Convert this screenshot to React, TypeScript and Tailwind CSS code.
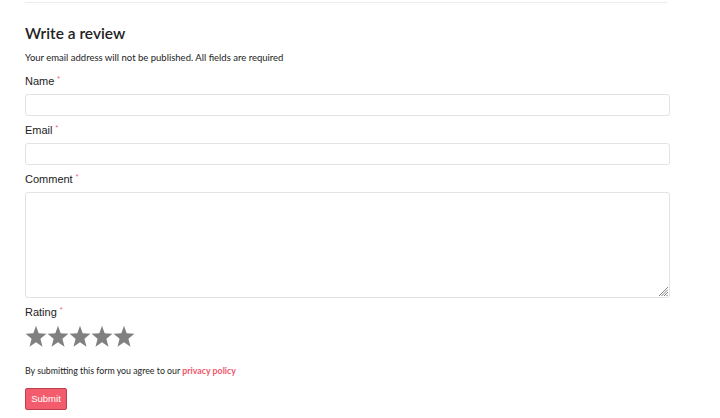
import React from "react";

function Star() {
  return (
    <svg width="22" height="23" viewBox="0 0 24 24" className="block" preserveAspectRatio="none">
      <polygon
        points="12,0.8 14.9,8.7 23.4,9.1 16.8,14.4 19.1,22.8 12,18 4.9,22.8 7.2,14.4 0.6,9.1 9.1,8.7"
        fill="#808080"
      />
    </svg>
  );
}

function Label({ text }: { text: string }) {
  return (
    <div
      className="h-[14px] leading-[14px] text-[11px] text-[#222]"
      style={{ fontFamily: '"Liberation Sans", Arial, sans-serif' }}
    >
      {text}
      <span className="relative -top-[4px] ml-[3px] text-[7px] text-[#f0566a]">*</span>
    </div>
  );
}

export default function App() {
  const raleway = { fontFamily: 'Lato, "Open Sans", sans-serif' };
  return (
    <div className="w-[720px] h-[418px] bg-white overflow-hidden">
      <div className="ml-[25px] w-[645px]">
        <div className="mt-[2px] h-px w-[642px] bg-[#ececec]" />
        <div
          className="mt-[20px] h-[20px] leading-[20px] text-[15.5px] font-semibold text-[#222]"
          style={raleway}
        >
          Write a review
        </div>
        <div className="mt-[8px] h-[14px] leading-[14px] text-[9.5px] text-[#222]" style={raleway}>
          Your email address will not be published. All fields are required
        </div>
        <div className="mt-[9px]">
          <Label text="Name" />
        </div>
        <input className="mt-[6px] block h-[22px] w-full rounded-[3px] border border-[#e3e3e3] bg-white" />
        <div className="mt-[7px]">
          <Label text="Email" />
        </div>
        <input className="mt-[6px] block h-[22px] w-full rounded-[3px] border border-[#e3e3e3] bg-white" />
        <div className="mt-[7px]">
          <Label text="Comment" />
        </div>
        <div className="relative mt-[6px]">
          <textarea className="block h-[106px] w-full resize-none rounded-[3px] border border-[#e3e3e3] bg-white" />
          <svg
            width="10"
            height="10"
            viewBox="0 0 10 10"
            className="pointer-events-none absolute bottom-[2px] right-[2px]"
          >
            <g stroke="#777" strokeWidth="0.9">
              <line x1="10" y1="1" x2="1" y2="10" />
              <line x1="10" y1="3.5" x2="3.5" y2="10" />
              <line x1="10" y1="6" x2="6" y2="10" />
              <line x1="10" y1="8.5" x2="8.5" y2="10" />
            </g>
          </svg>
        </div>
        <div className="mt-[7px]">
          <Label text="Rating" />
        </div>
        <div className="mt-[6px] flex h-[23px] items-center">
          <Star />
          <Star />
          <Star />
          <Star />
          <Star />
        </div>
        <div className="mt-[16px] h-[14px] leading-[14px] text-[8.8px] text-[#222]" style={raleway}>
          By submitting this form you agree to our{" "}
          <span className="font-bold text-[#f0566a]">privacy policy</span>
        </div>
        <button
          className="mt-[10px] block h-[22px] w-[42px] rounded-[2px] border border-[#b9414f] bg-[#f25c6c] text-[9.5px] text-white"
          style={{ fontFamily: '"Liberation Sans", Arial, sans-serif' }}
        >
          Submit
        </button>
      </div>
    </div>
  );
}
